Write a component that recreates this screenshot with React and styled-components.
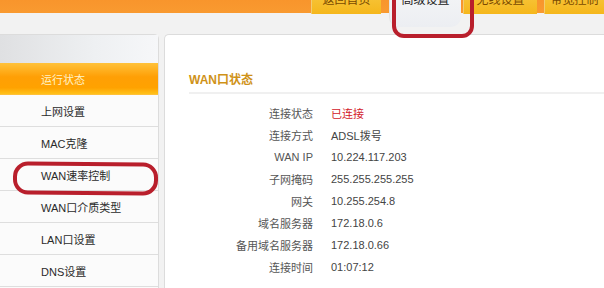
import React from 'react'
import styled, { createGlobalStyle } from 'styled-components'

const GlobalStyle = createGlobalStyle`
  html, body {
    margin: 0;
    padding: 0;
    background: #f2f2f2;
    font-family: "Liberation Sans", "Noto Sans CJK SC", sans-serif;
    font-size: 11px;
    color: #333;
    overflow: hidden;
  }
`

const Page = styled.div`
  position: relative;
  width: 604px;
  height: 288px;
  overflow: hidden;
  background: #f2f2f2;
`

const Header = styled.div`
  display: flex;
  align-items: flex-start;
  justify-content: flex-end;
  height: 34px;
  background: linear-gradient(#f8952c 0, #f99a30 13px, #f2f2f2 13px);
`

const Tab = styled.div`
  width: ${(p) => p.$w}px;
  margin-left: ${(p) => p.$gap}px;
  margin-top: -6px;
  height: ${(p) => (p.$active ? 33 : 20)}px;
  line-height: 12px;
  text-align: center;
  font-size: 12px;
  color: ${(p) => (p.$active ? '#222' : '#7a4a00')};
  background: ${(p) =>
    p.$active ? 'linear-gradient(#f3f4f6, #eceef2)' : 'linear-gradient(#f7c53a, #f5b71c)'};
  border-left: 1px solid ${(p) => (p.$active ? '#e4e4e4' : '#f2cc70')};
  border-radius: 0 0 ${(p) => (p.$active ? '10px 10px' : '0 0')};
  box-sizing: border-box;
  white-space: nowrap;
  overflow: hidden;
`

const Body = styled.div`
  display: flex;
  gap: 5px;
  height: 254px;
`

const Sidebar = styled.div`
  width: 159px;
  flex: none;
  background: #fbfbfb;
  border-right: 1px solid #dcdcdc;
  border-top: 1px solid #dcdcdc;
  border-top-right-radius: 5px;
  box-sizing: border-box;
`

const SideHead = styled.div`
  height: 28px;
  background: linear-gradient(90deg, #dfe0e2, #eef0f2 60%, #f6f7f9);
`

const SideItem = styled.div`
  height: 32px;
  display: flex;
  align-items: center;
  padding-left: 41px;
  box-sizing: border-box;
  border-bottom: 1px solid ${(p) => (p.$active ? 'transparent' : '#dedede')};
  color: ${(p) => (p.$active ? '#fff3c8' : '#2a2a2a')};
  background: ${(p) =>
    p.$active ? 'linear-gradient(#ffc23a, #ff9f05 45%, #ffa200 80%, #ffc21a)' : '#fbfbfb'};
`

const Main = styled.div`
  flex: 1;
  background: #fff;
  border-left: 1px solid #dcdcdc;
  border-top: 1px solid #dcdcdc;
  border-top-left-radius: 5px;
  padding: 35px 0 0 24px;
  box-sizing: border-box;
`

const Title = styled.div`
  font-size: 12px;
  font-weight: bold;
  color: #cf9218;
  padding-bottom: 5px;
  border-bottom: 2px solid #f0f0f0;
`

const Table = styled.div`
  display: grid;
  grid-template-columns: 124px auto;
  column-gap: 18px;
  grid-auto-rows: 22px;
  align-items: center;
  margin-top: 8px;
`

const Label = styled.div`
  text-align: right;
  color: #555;
`

const Value = styled.div`
  color: ${(p) => (p.$alert ? '#d2202a' : '#444')};
`

const Mark = styled.div`
  position: absolute;
  left: ${(p) => p.$x}px;
  top: ${(p) => p.$y}px;
  width: ${(p) => p.$w}px;
  height: ${(p) => p.$h}px;
  border: 4px solid #b91f2c;
  border-radius: ${(p) => p.$r}px;
  box-sizing: border-box;
  transform: rotate(${(p) => p.$rot || 0}deg);
  pointer-events: none;
`

const tabs = [
  { t: '返回首页', w: 70, gap: 0 },
  { t: '高级设置', w: 72, gap: 8, active: true },
  { t: '无线设置', w: 74, gap: 2 },
  { t: '带宽控制', w: 60, gap: 7 },
]

const menu = ['运行状态', '上网设置', 'MAC克隆', 'WAN速率控制', 'WAN口介质类型', 'LAN口设置', 'DNS设置']

const rows = [
  ['连接状态', '已连接', true],
  ['连接方式', 'ADSL拨号'],
  ['WAN IP', '10.224.117.203'],
  ['子网掩码', '255.255.255.255'],
  ['网关', '10.255.254.8'],
  ['域名服务器', '172.18.0.6'],
  ['备用域名服务器', '172.18.0.66'],
  ['连接时间', '01:07:12'],
]

const App = () => (
  <Page>
    <GlobalStyle />
    <Header>
      {tabs.map((tab) => (
        <Tab key={tab.t} $w={tab.w} $gap={tab.gap} $active={tab.active}>
          {tab.t}
        </Tab>
      ))}
    </Header>
    <Body>
      <Sidebar>
        <SideHead />
        {menu.map((m, i) => (
          <SideItem key={m} $active={i === 0}>
            {m}
          </SideItem>
        ))}
      </Sidebar>
      <Main>
        <Title>WAN口状态</Title>
        <Table>
          {rows.map(([l, v, alert]) => (
            <React.Fragment key={l}>
              <Label>{l}</Label>
              <Value $alert={alert}>{v}</Value>
            </React.Fragment>
          ))}
        </Table>
      </Main>
    </Body>
    <Mark $x={392} $y={-12} $w={82} $h={50} $r={12} />
    <Mark $x={13} $y={162} $w={145} $h={33} $r={15} $rot={0.5} />
  </Page>
)

export default App
